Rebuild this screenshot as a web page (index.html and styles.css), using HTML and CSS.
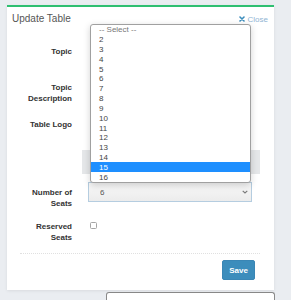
FILE: index.html
```html
<!DOCTYPE html>
<html lang="en">
  <head>
    <meta charset="UTF-8" />
    <meta name="viewport" content="width=device-width, initial-scale=1.0" />
    <title>Update Table</title>
    <link rel="stylesheet" href="styles.css">
  </head>
  <body>
    <div class="modal">
      <div class="modal-header">
        <span class="modal-title">Update Table</span>
        <a class="close-link" href="#">
          <svg class="close-icon" width="6" height="6" viewBox="0 0 6 6">
            <path d="M1 1L5 5M5 1L1 5" stroke="#3c8dbc" stroke-width="1.6" stroke-linecap="round" />
          </svg>
          Close
        </a>
      </div>

      <form class="modal-body">
        <div class="form-row row-topic">
          <label for="topic">Topic</label>
          <div class="field">
            <select id="topic" class="text-input"></select>
          </div>
        </div>

        <div class="form-row row-desc">
          <label for="topic_desc">Topic<br>Description</label>
          <div class="field">
            <textarea id="topic_desc" class="text-area"></textarea>
          </div>
        </div>

        <div class="form-row row-logo">
          <label>Table Logo</label>
          <div class="field">
            <div class="logo-bar"></div>
          </div>
        </div>

        <div class="form-row row-seats">
          <label for="seats">Number of<br>Seats</label>
          <div class="field select-wrap">
            <select id="seats" class="seat-select">
              <option>6</option>
            </select>
            <svg class="chevron" width="6" height="4" viewBox="0 0 6 4">
              <path d="M0.7 0.8L3 3L5.3 0.8" fill="none" stroke="#7a7a7a" stroke-width="1.1" />
            </svg>
          </div>
        </div>

        <div class="form-row row-reserved">
          <label for="reserved">Reserved<br>Seats</label>
          <div class="field">
            <input type="checkbox" id="reserved" class="check" />
          </div>
        </div>

        <hr class="divider" />

        <div class="modal-footer">
          <button type="button" class="save-btn">Save</button>
        </div>
      </form>

      <!-- open option list of the Topic select -->
      <ul class="select-list">
        <li class="placeholder">-- Select --</li>
        <li>2</li>
        <li>3</li>
        <li>4</li>
        <li>5</li>
        <li>6</li>
        <li>7</li>
        <li>8</li>
        <li>9</li>
        <li>10</li>
        <li>11</li>
        <li>12</li>
        <li>13</li>
        <li>14</li>
        <li class="active">15</li>
        <li>16</li>
      </ul>
    </div>

    <div class="next-dialog"></div>
  </body>
</html>
```

FILE: styles.css
```css
body {
  margin: 0;
  background-color: #eaedf1;
  font-family: "Liberation Sans", Arial, sans-serif;
  overflow: hidden;
}

.modal {
  position: relative;
  margin: 5px 0 0 7px;
  width: 267px;
  height: 285px;
  box-sizing: border-box;
  background-color: #fff;
  border-top: 2px solid #2fbf71; /* green accent */
  box-shadow: 0 1px 3px rgba(0, 0, 0, 0.08);
}

.modal-header {
  display: flex;
  justify-content: space-between;
  align-items: center;
  height: 22px;
  padding: 0 6px 0 5px;
}

.modal-title {
  font-size: 10px;
  color: #555;
}

.close-link {
  display: flex;
  align-items: center;
  gap: 3px;
  margin-top: 2px;
  font-size: 8px;
  color: #8fb4d3;
  text-decoration: none;
}

.modal-body {
  margin: 0;
  padding-top: 11px;
}

.form-row {
  display: grid;
  grid-template-columns: 58px 1fr;
  column-gap: 16px;
  padding: 0 22px 0 7px;
  box-sizing: border-box;
}

.form-row label {
  font-size: 8px;
  font-weight: bold;
  line-height: 11px;
  color: #333;
  text-align: right;
}

.row-topic {
  height: 32px;
}

.row-topic label {
  padding-top: 6px;
}

.row-desc {
  height: 40px;
}

.row-desc label {
  padding-top: 10px;
}

.row-logo {
  height: 70px;
}

.row-logo label {
  padding-top: 7px;
}

.row-seats {
  height: 33px;
}

.row-seats label {
  padding-top: 5px;
}

.row-reserved {
  height: 35px;
}

.row-reserved label {
  padding-top: 6px;
}

/* these sit under the open list, keep them inside its edges */
.text-input {
  display: block;
  width: calc(100% - 4px);
  height: 20px;
  margin: 1px 0 0 2px;
  border: 1px solid #e4e4e4;
  background: #fff;
}

.text-area {
  display: block;
  width: calc(100% - 4px);
  height: 36px;
  margin: 2px 0 0 2px;
  box-sizing: border-box;
  border: 1px solid #e4e4e4;
  resize: none;
}

.logo-bar {
  height: 24px;
  margin: 38px -8px 0 -6px;
  background-color: #e5e7e9;
}

.select-wrap {
  position: relative;
}

.seat-select {
  display: block;
  width: 100%;
  height: 20px;
  padding: 0 0 0 11px;
  border: 1px solid #b5cde0;
  border-radius: 0;
  background: linear-gradient(#f8f8f8, #ececec);
  font-family: "Liberation Sans", Arial, sans-serif;
  font-size: 8px;
  color: #555;
  appearance: none;
  -webkit-appearance: none;
}

.chevron {
  position: absolute;
  right: 4px;
  top: 8px;
}

.check {
  appearance: none;
  -webkit-appearance: none;
  display: block;
  width: 7px;
  height: 7px;
  margin: 7px 0 0 2px;
  border: 1px solid #a5a5a5;
  border-radius: 1.5px;
  background: #fff;
}

.divider {
  margin: 3px 14px 0 13px;
  border: none;
  border-top: 1px dotted #e0e0e0;
}

.modal-footer {
  display: flex;
  justify-content: flex-end;
  padding: 6px 19px 0 0;
}

.save-btn {
  width: 33px;
  height: 20px;
  padding: 0;
  border: 1px solid #3a86b5;
  border-radius: 2px;
  background-color: #3c8dbc;
  color: #fff;
  font-family: "Liberation Sans", Arial, sans-serif;
  font-size: 8px;
  font-weight: bold;
}

.select-list {
  position: absolute;
  left: 83px;
  top: 17px;
  width: 161px;
  height: 159px;
  box-sizing: border-box;
  margin: 0;
  padding: 0;
  list-style: none;
  display: flex;
  flex-direction: column;
  background: #fff;
  border: 1px solid #a0a0a0;
  border-radius: 3px;
  box-shadow: 0 2px 7px rgba(0, 0, 0, 0.18);
  font-size: 8px;
  color: #444;
}

.select-list li {
  flex: 1;
  display: flex;
  align-items: center;
  padding-left: 8px;
}

.select-list .placeholder {
  color: #777;
}

.select-list .active {
  background-color: #1e8fff;
  color: #fff;
}

.next-dialog {
  margin: 2px 0 0 106px;
  width: 169px;
  height: 20px;
  box-sizing: border-box;
  border: 1px solid #8a8a8a;
  border-bottom: none;
  border-radius: 3px 3px 0 0;
  background: #fff;
}
```
